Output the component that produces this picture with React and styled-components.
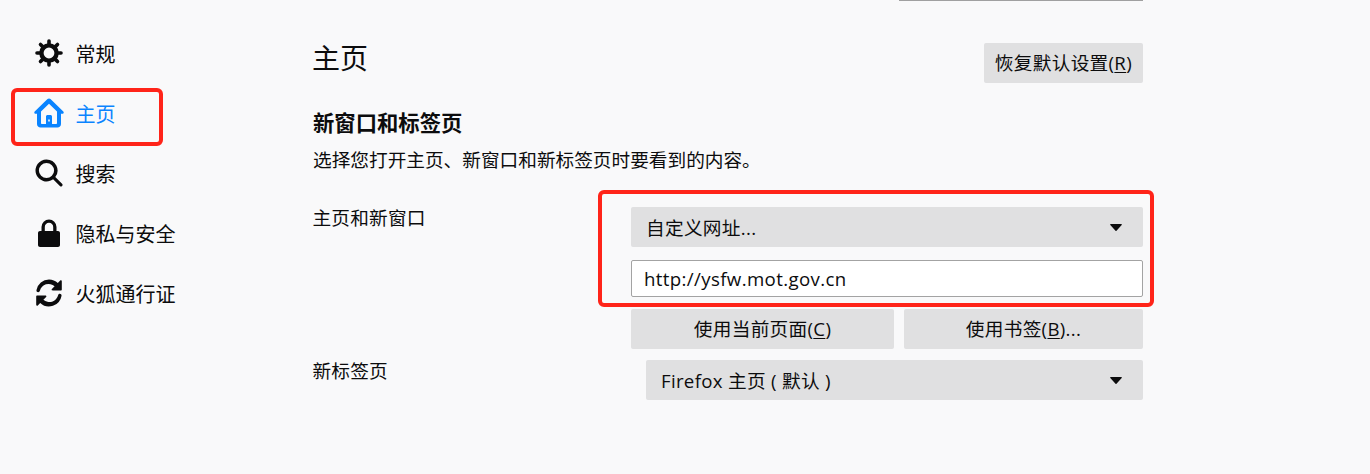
import styled, { createGlobalStyle } from 'styled-components';

const GlobalStyle = createGlobalStyle`
	html, body {
		margin: 0;
		padding: 0;
		background: #f9f9fa;
	}
	body {
		font-family: "Open Sans", "Noto Sans CJK SC", sans-serif;
		color: #0c0c0d;
	}
`;

const Page = styled.div`
	position: relative;
	display: flex;
	width: 1370px;
	height: 474px;
	overflow: hidden;
	background: #f9f9fa;
`;

const Sidebar = styled.nav`
	width: 313px;
	padding-top: 23px;
	box-sizing: border-box;
	flex-shrink: 0;
`;

const NavItem = styled.div`
	display: flex;
	align-items: center;
	gap: 12px;
	height: 60px;
	padding-left: 33.5px;
	font-size: 20px;
	color: ${(p) => (p.$active ? '#0a84ff' : '#0c0c0d')};
`;

const NavIcon = styled.svg`
	width: 30px;
	height: 30px;
	fill: currentColor;
	flex-shrink: 0;
`;

const Content = styled.main`
	width: 830px;
	font-size: 18.67px;
`;

const SearchEdge = styled.div`
	width: 244px;
	height: 1px;
	margin-left: auto;
	background: #a0a0a0;
`;

const Header = styled.header`
	display: flex;
	justify-content: space-between;
	align-items: flex-start;
	margin-top: 42px;
`;

const Title = styled.h1`
	margin: 0 0 0 -1px;
	font-size: 28px;
	font-weight: 400;
	line-height: 30px;
`;

const Button = styled.button`
	height: 40px;
	padding: 0 11px 3px;
	border: 0;
	border-radius: 2px;
	background: #e0e0e1;
	color: #0c0c0d;
	font: inherit;
	letter-spacing: 0.3px;
	text-align: center;
`;

const AccessKey = styled.u`
	text-underline-offset: 2px;
`;

const SectionTitle = styled.h2`
	margin: 25px 0 0;
	font-size: 21.33px;
	font-weight: 700;
	line-height: 29px;
`;

const Description = styled.p`
	margin: 10px 0 0;
	line-height: 25px;
`;

const SettingRow = styled.div`
	display: grid;
	grid-template-columns: 318px 1fr;
	margin-top: ${(p) => p.$top}px;
`;

const Label = styled.div`
	margin-left: -0.5px;
	letter-spacing: 0.2px;
	line-height: 22px;
`;

const Controls = styled.div`
	display: flex;
	flex-direction: column;
`;

const Select = styled.div`
	display: flex;
	align-items: center;
	justify-content: space-between;
	height: 40px;
	margin-left: ${(p) => p.$indent || 0}px;
	padding: 0 21px 2px 15px;
	box-sizing: border-box;
	border-radius: 2px;
	background: #e0e0e1;
	letter-spacing: 0.3px;
`;

const Caret = styled.svg`
	width: 12px;
	height: 7px;
	margin-top: 2px;
	fill: #0c0c0d;
`;

const UrlInput = styled.div`
	display: flex;
	align-items: center;
	height: 37px;
	margin-top: 13px;
	padding-left: 12px;
	box-sizing: border-box;
	border: 1px solid #a3a3a3;
	border-radius: 2px;
	background: #fff;
	letter-spacing: 0.36px;
`;

const ButtonRow = styled.div`
	display: grid;
	grid-template-columns: 263px 239px;
	gap: 10px;
	margin-top: 12px;
`;

const Annotation = styled.div`
	position: absolute;
	left: ${(p) => p.$x}px;
	top: ${(p) => p.$y}px;
	width: ${(p) => p.$w}px;
	height: ${(p) => p.$h}px;
	box-sizing: border-box;
	border: 4px solid #ff2419;
	border-radius: 6px;
	pointer-events: none;
`;

const gearTeeth = [0, 45, 90, 135, 180, 225, 270, 315];

const icons = {
	gear: (
		<>
			<circle cx="15" cy="15" r="7.6" fill="none" stroke="currentColor" strokeWidth="4.4" />
			{gearTeeth.map((angle) => (
				<line
					key={angle}
					x1="15"
					y1="6"
					x2="15"
					y2="3"
					stroke="currentColor"
					strokeWidth="3.6"
					strokeLinecap="round"
					transform={`rotate(${angle} 15 15)`}
				/>
			))}
		</>
	),
	home: (
		<path
			fillRule="evenodd"
			d="M15 .5c.6 0 1.100.2 1.500.6l12.800 12.300c.9.900.3 2.400-1 2.400H27v10.200c0 2-1.600 3.500-3.500 3.500h-17C4.600 29.500 3 28 3 26V15.800H1.700c-1.300 0-1.900-1.500-1-2.400L13.500 1.100c.4-.4.900-.6 1.500-.6Zm0 5.200L7 13.600V25c0 .6.400 1 1 1h4v-7.500c0-.8.700-1.500 1.500-1.500h3c.8 0 1.500.7 1.500 1.500V26h4c.6 0 1-.4 1-1V13.600L15 5.700ZM14.200 21.500v2h1.600v-2h-1.600Z"
		/>
	),
	search: (
		<path
			fillRule="evenodd"
			d="M12.500 1.500a11 11 0 0 1 8.800 17.600l7 7a1.600 1.600 0 0 1-2.200 2.200l-7-7A11 11 0 1 1 12.500 1.500Zm0 3.400a7.600 7.600 0 1 0 0 15.200 7.600 7.600 0 0 0 0-15.200Z"
		/>
	),
	lock: (
		<path
			fillRule="evenodd"
			d="M15 1.500a7.500 7.500 0 0 1 7.500 7.500v4H24c1.100 0 2 .9 2 2v12c0 1.100-.9 2-2 2H6c-1.100 0-2-.9-2-2V15c0-1.100.9-2 2-2h1.500V9A7.500 7.500 0 0 1 15 1.500Zm0 3.300A4.200 4.200 0 0 0 10.800 9v4h8.400V9A4.200 4.200 0 0 0 15 4.800Z"
		/>
	),
	sync: (
		<path d="M15 1.500c3.400 0 6.500 1.300 8.800 3.500l2.400-2.400c.6-.6 1.600-.2 1.600.6v8.300c0 .6-.5 1-1 1h-8.200c-.9 0-1.300-1-.7-1.600l2.700-2.700A9 9 0 0 0 5.900 12.800c-.2.800-.9 1.400-1.700 1.400-1.100 0-2-1-1.700-2.100A12.800 12.800 0 0 1 15 1.500ZM25.800 15.800c1.100 0 2 1 1.700 2.100A12.800 12.800 0 0 1 6.200 25l-2.400 2.400c-.6.600-1.600.2-1.600-.6v-8.300c0-.6.500-1 1-1h8.200c.9 0 1.300 1 .7 1.600l-2.700 2.700a9 9 0 0 0 14.700-4.600c.2-.8.900-1.400 1.700-1.400Z" />
	),
};

const navItems = [
	{ key: 'gear', label: '常规' },
	{ key: 'home', label: '主页', active: true },
	{ key: 'search', label: '搜索' },
	{ key: 'lock', label: '隐私与安全' },
	{ key: 'sync', label: '火狐通行证' },
];

const DropCaret = () => (
	<Caret viewBox="0 0 12 7">
		<path d="M.8 0h10.400c.6 0 .9.7.5 1.100L6.500 6.700c-.3.3-.7.3-1 0L.3 1.100C-.1.700.2 0 .8 0Z" />
	</Caret>
);

export default function App() {
	return (
		<Page>
			<GlobalStyle />
			<Sidebar>
				{navItems.map((item) => (
					<NavItem key={item.key} $active={item.active}>
						<NavIcon viewBox="0 0 30 30">{icons[item.key]}</NavIcon>
						<span>{item.label}</span>
					</NavItem>
				))}
			</Sidebar>
			<Content>
				<SearchEdge />
				<Header>
					<Title>主页</Title>
					<Button>
						恢复默认设置(<AccessKey>R</AccessKey>)
					</Button>
				</Header>
				<SectionTitle>新窗口和标签页</SectionTitle>
				<Description>选择您打开主页、新窗口和新标签页时要看到的内容。</Description>
				<SettingRow $top={35}>
					<Label>主页和新窗口</Label>
					<Controls>
						<Select>
							<span>自定义网址...</span>
							<DropCaret />
						</Select>
						<UrlInput>http://ysfw.mot.gov.cn</UrlInput>
						<ButtonRow>
							<Button>
								使用当前页面(<AccessKey>C</AccessKey>)
							</Button>
							<Button>
								使用书签(<AccessKey>B</AccessKey>)...
							</Button>
						</ButtonRow>
					</Controls>
				</SettingRow>
				<SettingRow $top={11}>
					<Label>新标签页</Label>
					<Controls>
						<Select $indent={15}>
							<span>Firefox 主页 ( 默认 )</span>
							<DropCaret />
						</Select>
					</Controls>
				</SettingRow>
			</Content>
			<Annotation $x={11} $y={88} $w={152} $h={58} />
			<Annotation $x={598} $y={190} $w={556} $h={117} />
		</Page>
	);
}
